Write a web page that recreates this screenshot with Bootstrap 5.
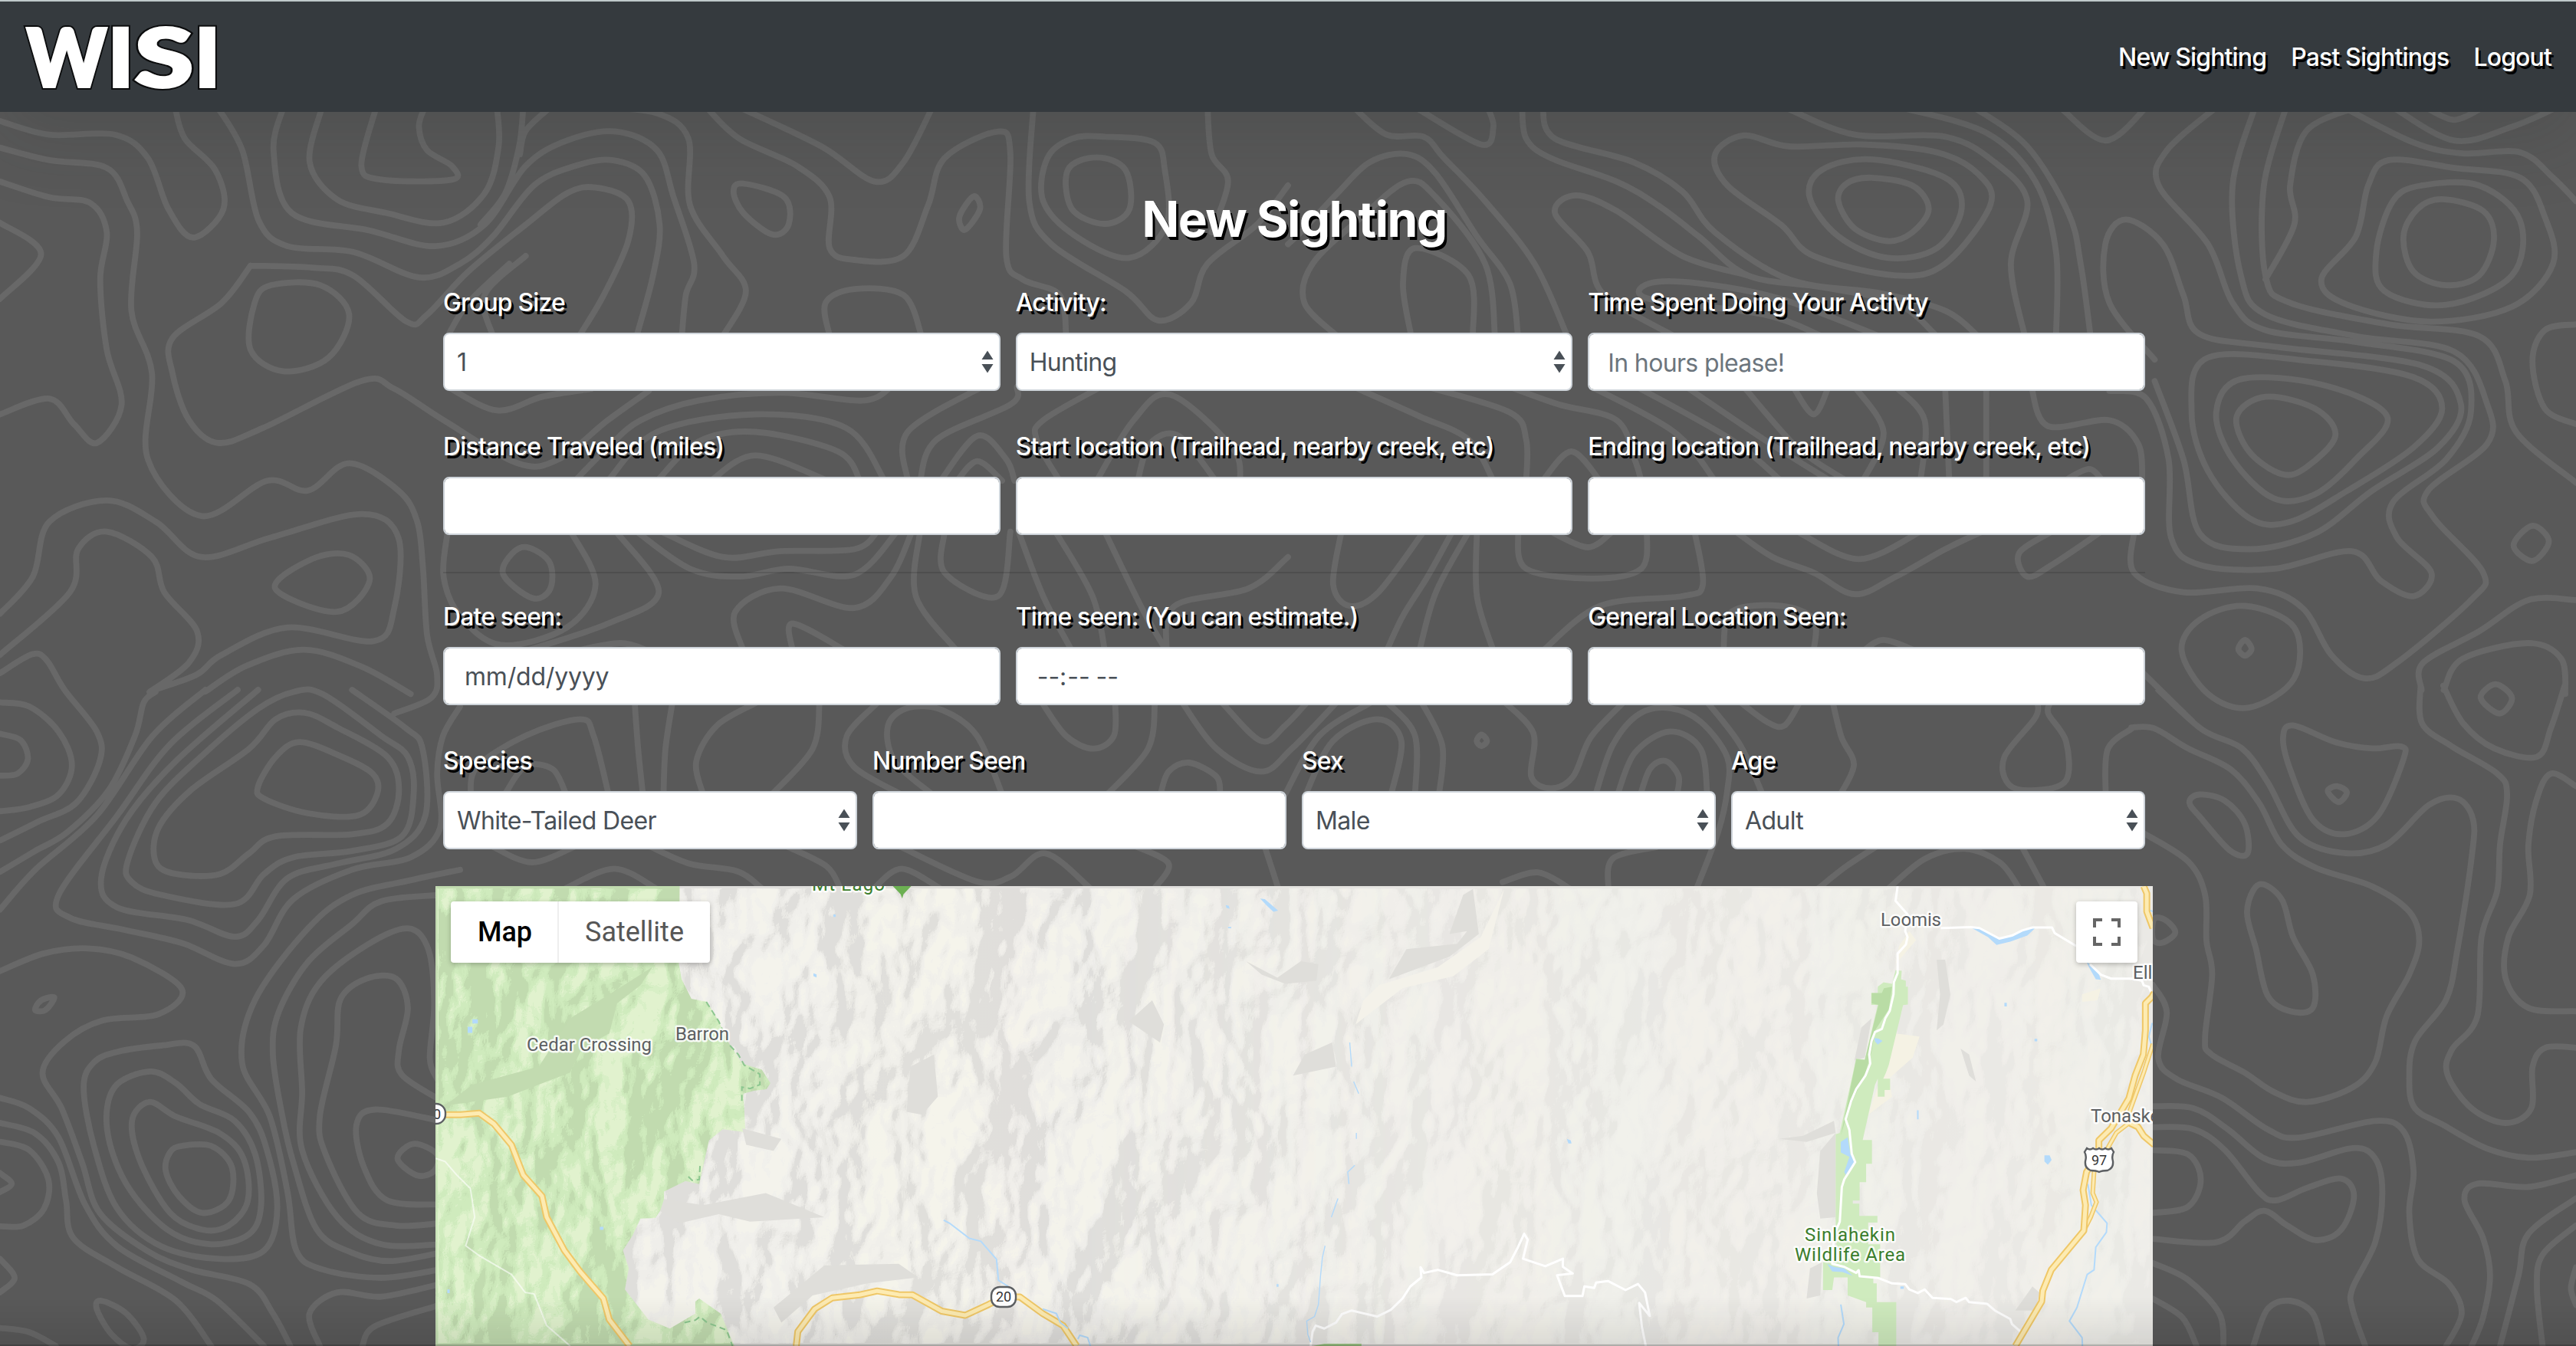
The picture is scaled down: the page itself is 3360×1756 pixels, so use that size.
<!DOCTYPE html>
<html lang="en">
<head>
<meta charset="utf-8">
<title>WISI - New Sighting</title>
<meta name="viewport" content="width=device-width, initial-scale=1">
<link href="https://cdn.jsdelivr.net/npm/bootstrap@5.3.0/dist/css/bootstrap.min.css" rel="stylesheet">
<style>
  html { font-size: 32px; height: 100%; overflow: hidden; }
  body {
    --bs-border-width: 2px;
    height: 100%; overflow: hidden; position: relative;
    background: #595959; color: #fff;
    font-family: Inter, "Liberation Sans", sans-serif; line-height: 1.5;
  }
  .topo { position: absolute; inset: 0; z-index: -1; }
  .topo path { fill: none; stroke: #686868; stroke-width: 7.8; stroke-linecap: round; stroke-linejoin: round; }
  .site-nav { height: 146px; background: #353a3e; border-top: 2px solid #bfc9ca; padding: 0 32px; --bs-navbar-nav-link-padding-x: 16px; }
  .site-nav .container-fluid { padding: 0; }
  .site-nav .navbar-nav .nav-link { padding: 2px 16px 0; line-height: 48px; }
  .site-nav .navbar-nav { margin-right: -16px; }
  .drop-ink { color: #fff !important; text-shadow: 3px 4px 0 #000; font-weight: 500; letter-spacing: -.86px; }
  .brand-mark { display: block; width: 256px; height: 104px; overflow: visible; }
  .brand-mark text { font-family: Lato, sans-serif; font-weight: 900; font-size: 104px; stroke-linejoin: miter; }
  .brand-mark .rim { fill: #0b0c0d; stroke: #0b0c0d; stroke-width: 8px; }
  .brand-mark .face { fill: #fff; stroke: #fff; stroke-width: 4px; }
  .sheet { width: 2240px; margin: 0 auto; padding-top: 101px; position: relative; left: 8px; }
  .sheet-title { font-size: 64px; font-weight: 700; line-height: 77px; margin: 0 0 46px; letter-spacing: -1.6px; text-shadow: 3px 4px 0 #000; }
  .sheet .row { --bs-gutter-x: 20px; margin: 0; }
  .field { margin-bottom: 48px; }
  .field .form-label { display: block; padding: 1px 0 0; margin-bottom: 15px; line-height: 48px; }
  .field .form-control, .field .form-select {
    height: 76px; border: 2px solid #ced4da; border-radius: 8px; background-color: #fff; color: #495057;
    font-size: 32px; padding: 13px 24px 11px; letter-spacing: -.65px; line-height: 48px;
  }
  .field input[type=date].form-control, .field input[type=time].form-control { padding-left: 26px; letter-spacing: -.2px; }
  .field input[type=time].form-control { letter-spacing: .4px; }
  .field .form-control::placeholder { color: #6c757d; opacity: 1; }
  .field .form-select {
    padding: 13px 56px 11px 16px;
    background-image: url("data:image/svg+xml,%3csvg xmlns='http://www.w3.org/2000/svg' viewBox='0 0 16 30'%3e%3cpath fill='%23495057' d='M8 .5L.5 12h15zM8 29.5L.5 18h15z'/%3e%3c/svg%3e");
    background-size: 16px 30px; background-position: right 7px center;
  }
  ::-webkit-calendar-picker-indicator { display: none !important; }
  .rule { height: 2px; margin: 0 10px 32px; background: rgba(0,0,0,.12); }
  .map-pane { height: 600px; overflow: hidden; background: #f0efea; }
  .map-pane > svg { display: block; }
  .map-pane .label { font: 400 24px Roboto, sans-serif; fill: #5c5f62; stroke: rgba(255,255,255,.85); stroke-width: 5px; paint-order: stroke; stroke-linejoin: round; }
  .map-pane .park { fill: #3a7d2c; }
  .map-pane g path { vector-effect: non-scaling-stroke; }
  .casing { fill: none; stroke: #efc767; stroke-width: 9; stroke-linejoin: round; }
  .hwy { fill: none; stroke: #fdebb2; stroke-width: 5; stroke-linejoin: round; }
  .casing2 { fill: none; stroke: #efc767; stroke-width: 6; }
  .hwy2 { fill: none; stroke: #fdebb2; stroke-width: 3; }
  .minor { fill: none; stroke: #fff; stroke-width: 3; stroke-linejoin: round; }
  .river { fill: none; stroke: #b3dafb; stroke-width: 2; }
  .lake { fill: #b3dafb; }
  .trail { fill: none; stroke: #8cc68f; stroke-width: 2; stroke-dasharray: 8 5; }
  .map-switch, .map-full { position: absolute; top: 20px; height: 80px; background: #fff; border-radius: 4px; box-shadow: 0 2px 6px rgba(0,0,0,.25); }
  .map-switch { left: 20px; width: 338px; font: 400 36px/80px Roboto, sans-serif; color: #565656; }
  .map-switch span:first-child { width: 141px; padding-left: 2px; color: #000; font-weight: 500; border-right: 2px solid #eee; }
  .map-full { right: 20px; width: 80px; }
  .edge { position: absolute; left: 0; right: 0; bottom: 0; height: 64px; pointer-events: none; background: linear-gradient(transparent, rgba(0,0,0,.09)); border-bottom: 2px solid rgba(0,0,0,.25); }
</style>
<script src="https://cdn.jsdelivr.net/npm/bootstrap@5.3.0/dist/js/bootstrap.bundle.min.js"></script>
</head>
<body>
<svg class="topo" id="topo" width="3360" height="1756" viewBox="0 0 3360 1756" aria-hidden="true"></svg>

<nav class="navbar navbar-expand site-nav shadow-lg">
  <div class="container-fluid">
    <a class="navbar-brand p-0 m-0" href="#" aria-label="WISI">
      <svg class="brand-mark" viewBox="32 20 256 104">
        <defs>
          <g id="wordmark">
            <text x="35" y="111" textLength="104" lengthAdjust="spacingAndGlyphs">W</text>
            <text x="141" y="111" textLength="33" lengthAdjust="spacingAndGlyphs">I</text>
            <text x="176" y="111" textLength="76" lengthAdjust="spacingAndGlyphs">S</text>
            <text x="254" y="111" textLength="33" lengthAdjust="spacingAndGlyphs">I</text>
          </g>
        </defs>
        <use href="#wordmark" class="rim"/>
        <use href="#wordmark" class="face"/>
      </svg>
    </a>
    <div class="navbar-nav">
      <a class="nav-link drop-ink" href="#">New Sighting</a>
      <a class="nav-link drop-ink" href="#">Past Sightings</a>
      <a class="nav-link drop-ink" href="#">Logout</a>
    </div>
  </div>
</nav>

<main class="sheet">
  <h1 class="sheet-title text-center">New Sighting</h1>
  <form>
    <div class="row">
      <div class="col-4 field"><label class="form-label drop-ink">Group Size</label><select class="form-select"><option>1</option></select></div>
      <div class="col-4 field"><label class="form-label drop-ink">Activity:</label><select class="form-select"><option>Hunting</option></select></div>
      <div class="col-4 field"><label class="form-label drop-ink">Time Spent Doing Your Activty</label><input class="form-control" type="text" placeholder="In hours please!"></div>
      <div class="col-4 field"><label class="form-label drop-ink">Distance Traveled (miles)</label><input class="form-control" type="text"></div>
      <div class="col-4 field"><label class="form-label drop-ink">Start location (Trailhead, nearby creek, etc)</label><input class="form-control" type="text"></div>
      <div class="col-4 field"><label class="form-label drop-ink">Ending location (Trailhead, nearby creek, etc)</label><input class="form-control" type="text"></div>
    </div>
    <div class="rule"></div>
    <div class="row">
      <div class="col-4 field"><label class="form-label drop-ink">Date seen:</label><input class="form-control" type="date"></div>
      <div class="col-4 field"><label class="form-label drop-ink">Time seen: (You can estimate.)</label><input class="form-control" type="time"></div>
      <div class="col-4 field"><label class="form-label drop-ink">General Location Seen:</label><input class="form-control" type="text"></div>
      <div class="col-3 field"><label class="form-label drop-ink">Species</label><select class="form-select"><option>White-Tailed Deer</option></select></div>
      <div class="col-3 field"><label class="form-label drop-ink">Number Seen</label><input class="form-control" type="text"></div>
      <div class="col-3 field"><label class="form-label drop-ink">Sex</label><select class="form-select"><option>Male</option></select></div>
      <div class="col-3 field"><label class="form-label drop-ink">Age</label><select class="form-select"><option>Adult</option></select></div>
    </div>
  </form>

  <div class="map-pane position-relative">
    <svg width="2240" height="600" viewBox="568 1156 2240 600">
      <defs>
        <filter id="relief" x="0" y="0" width="1" height="1" color-interpolation-filters="sRGB">
          <feTurbulence type="fractalNoise" baseFrequency="0.010 0.0065" numOctaves="4" seed="11"/>
          <feColorMatrix values="0 0 0 0 0  0 0 0 0 0  0 0 0 0 0  1 0 0 0 0"/>
          <feGaussianBlur stdDeviation="1.6"/>
          <feDiffuseLighting surfaceScale="34" lighting-color="#fff"><feDistantLight azimuth="200" elevation="58"/></feDiffuseLighting>
          <feComponentTransfer>
            <feFuncR type="discrete" tableValues=".871 .871 .871 .871 .871 .871 .871 .871 .871 .871 .871 .871 .871 .900 .915 .928 .941 .941 .949 .960"/>
            <feFuncG type="discrete" tableValues=".867 .867 .867 .867 .867 .867 .867 .867 .867 .867 .867 .867 .867 .896 .911 .924 .937 .937 .945 .953"/>
            <feFuncB type="discrete" tableValues=".855 .855 .855 .855 .855 .855 .855 .855 .855 .855 .855 .855 .855 .882 .896 .908 .918 .918 .925 .922"/>
          </feComponentTransfer>
        </filter>
        <filter id="reliefGreen" x="0" y="0" width="1" height="1" color-interpolation-filters="sRGB">
          <feTurbulence type="fractalNoise" baseFrequency="0.010 0.0065" numOctaves="4" seed="4"/>
          <feColorMatrix values="0 0 0 0 0  0 0 0 0 0  0 0 0 0 0  1 0 0 0 0"/>
          <feGaussianBlur stdDeviation="1.6"/>
          <feDiffuseLighting surfaceScale="34" lighting-color="#fff"><feDistantLight azimuth="200" elevation="58"/></feDiffuseLighting>
          <feComponentTransfer>
            <feFuncR type="discrete" tableValues=".76 .76 .76 .76 .76 .76 .76 .76 .76 .76 .76 .76 .76 .76 .785 .80 .815 .815 .85 .885"/>
            <feFuncG type="discrete" tableValues=".86 .86 .86 .86 .86 .86 .86 .86 .86 .86 .86 .86 .86 .86 .895 .91 .922 .922 .94 .95"/>
            <feFuncB type="discrete" tableValues=".69 .69 .69 .69 .69 .69 .69 .69 .69 .69 .69 .69 .69 .69 .715 .73 .745 .745 .78 .81"/>
          </feComponentTransfer>
        </filter>
        <linearGradient id="fadeEast" x1="0" x2="1"><stop offset="0" stop-color="#fff"/><stop offset=".38" stop-color="#eee"/><stop offset=".58" stop-color="#777"/><stop offset="1" stop-color="#4a4a4a"/></linearGradient>
        <mask id="eastMask"><rect x="568" y="1156" width="2240" height="600" fill="url(#fadeEast)"/></mask>
        <clipPath id="forest"><path transform="translate(560 1140) scale(.5102 .3929)" d="M16 41H640L638 300 645 350 670 415 710 425 740 490 765 560 800 630 850 650 872 695 862 715 830 720 803 730 808 858 750 848 715 885 695 1000 690 1030 655 1020 600 1055 600 1100 578 1143 540 1145 520 1200 495 1250 510 1310 500 1380 560 1480 615 1510 680 1460 680 1420 690 1410 745 1460 780 1568H16z"/></clipPath>
      </defs>
      <g mask="url(#eastMask)"><rect x="568" y="1156" width="2240" height="600" filter="url(#relief)"/></g>
      <g clip-path="url(#forest)"><rect x="568" y="1156" width="460" height="600" filter="url(#reliefGreen)"/></g>

      <g transform="translate(560 1140) scale(.5102 .3929)">
        <path fill="#c2dbb0" d="M360 480L460 400 570 310 540 370 480 430 460 530 390 580 360 660 200 740 40 770 110 700 280 640z"/>
        <path fill="#dfdeda" d="M600 1080L700 1100 860 1060 1010 1140 820 1155 740 1130 640 1160 590 1120zM1010 1300L1200 1295 1250 1340 1120 1360 980 1400 900 1490 880 1440zM1230 640L1290 600 1300 740 1260 800 1220 790zM800 845L900 880 880 920 810 900z"/>
        <path class="trail" d="M708 425L740 490 765 565 790 600 805 635 845 665 845 700 820 713 799 708 799 765M692 970L690 1015 672 1018 658 1000M652 1490L680 1482 692 1470 710 1490 760 1515 775 1568"/>
        <path class="minor" stroke-opacity=".6" style="stroke-width:2" d="M16 945L40 955 70 1000 105 1045 116 1140 93 1235 130 1270 210 1330 245 1390 268 1395 300 1500 360 1568"/>
        <path class="river" d="M1315 1150L1330 1160 1380 1210 1410 1220 1450 1280 1455 1350 1480 1370"/>
        <path class="casing" d="M16 800H80L128 795 165 830 210 900 240 1000 288 1070 300 1140 345 1250 385 1320 445 1410 460 1480 512 1568M938 1568L942 1520 985 1445 1030 1408 1100 1398 1145 1385 1200 1397 1235 1398 1310 1452 1370 1466 1430 1430 1468 1405 1510 1405 1568 1460 1620 1500 1655 1568"/>
        <path class="hwy" d="M16 800H80L128 795 165 830 210 900 240 1000 288 1070 300 1140 345 1250 385 1320 445 1410 460 1480 512 1568M938 1568L942 1520 985 1445 1030 1408 1100 1398 1145 1385 1200 1397 1235 1398 1310 1452 1370 1466 1430 1430 1468 1405 1510 1405 1568 1460 1620 1500 1655 1568"/>
        <path class="lake" d="M110 483h14v14h-14zM98 508h12v20h-12zM982 330l8 4 0 10-8-4zM436 1172h9v10h-9zM46 1380h6v12h-6zM1033 135h6v8h-6z"/>
        <path fill="#6cb052" d="M1185 41H1232L1212 68 1209 82 1205 68z"/>
      </g>
      <g transform="translate(1360 1140) scale(.5102 .3929)">
        <path fill="#dfdeda" d="M885 350L930 250 1060 232 1085 190 1040 200 1075 70 1100 50 1115 200 1040 275zM600 345L660 290 705 300 700 355 620 365 560 335 520 290zM640 670L670 600 740 560 750 640zM220 490L280 420 310 500 300 560z"/>
        <path fill="#f4f2ea" d="M860 370L1010 310 1120 210 1180 50 1140 250 1050 340 920 380 800 500 820 420z"/>
        <path class="minor" d="M685 1568L690 1520 698 1500 720 1510 750 1490 765 1462 790 1450 855 1470 890 1448 920 1410 940 1370 968 1340 966 1306 975 1325 1010 1315 1060 1333 1150 1330 1195 1290 1215 1240 1231 1195 1240 1215 1228 1278 1285 1303 1330 1278 1330 1305 1355 1327 1315 1333 1335 1402H1380L1385 1370 1410 1375 1415 1357 1445 1352 1490 1382 1522 1362 1540 1390 1552 1468 1525 1425 1532 1505 1542 1568"/>
        <path class="river" style="stroke-width:1.4" d="M785 560L790 640M795 690L808 730M802 860V880M798 968L780 990 783 1030M755 1078L738 1140M722 1235L715 1275 710 1340 705 1430 695 1470 675 1485 678 1530 685 1555"/>
        <path class="river" d="M0 1445L35 1460 45 1490 65 1510M90 1545L95 1532 115 1540 122 1568"/>
        <path class="lake" d="M556 82L568 84 602 122 590 126 575 108zM468 104l8 2 2 10-8-3zM474 176h8v5h-8zM1340 880l10 5 2 10-8 0zM598 1362h5v9h-5z"/>
        <path fill="#a5d08c" d="M690 1568L720 1560H815V1568z"/>
      </g>
      <g transform="translate(2160 1140) scale(.4464 .3929)">
        <path fill="#dfdeda" d="M820 285L845 285 860 400 840 500 820 520 830 400zM890 580L915 600 935 690 915 670zM480 920L525 860 525 1140 480 1145 470 1060zM600 510L630 480 610 610 580 620zM360 880L430 870 520 820 525 860 440 890zM450 1310L485 1290 480 1400 440 1410zM1100 1370L1120 1390 1110 1450 1050 1450z"/>
        <path fill="#f5f2e4" d="M740 190L760 220 700 300 710 240zM700 530L770 540 750 610 680 680 690 740 620 800 650 700zM1245 400L1300 380 1290 420 1245 425z"/>
        <path fill="#cfebbe" d="M700 320L718 322 716 350 730 355 730 375 736 375 736 434 722 436 680 635 672 660 664 680H684V718H668V740H648V680L640 700 604 884H631V963H614V1024H595V1085H575V1095H594V1136H647V1158H620V1230H655V1340H635V1360H645V1422H702V1568H650V1522H632V1440H614V1422L560 1400V1340H520L515 1382H488V1290L530 1270 525 1200V865L537 860 585 613 610 618 648 435H629V396H648V375L665 360 690 365z"/>
        <path fill="#b9dca5" d="M666 380L690 375 680 450 640 520 630 590 612 660 560 790 540 870 585 615 610 618 650 435 630 430V396H660z"/>
        <path class="lake" d="M920 178L950 183 1003 215 1040 205 1075 183 1108 180 1085 205 1035 225 995 236 970 210zM1258 292L1290 320 1300 352 1285 350 1265 310zM540 890L560 875 568 930 582 955 555 1000 550 990 565 940 540 925zM638 545l12 2 12 8-14 12-8-10zM1135 935L1150 935 1156 950 1145 966 1135 955zM500 1295L520 1305 550 1310 575 1335 545 1322 515 1320zM714 1370h10v8h-10zM1018 428h7v12h-7zM1106 548h8v8h-8z"/>
        <path class="river" d="M540 1430L549 1495 532 1540 533 1568M1262 1030L1272 1100 1318 1160 1316 1190 1285 1240 1280 1315 1260 1330 1230 1440 1208 1485 1245 1540 1246 1568M1450 495L1440 540 1448 570M1440 120L1452 125M1425 600L1400 700M765 785V815"/>
        <path class="minor" d="M706 41L700 90 735 135 728 190 735 210 730 235 706 265 706 330 695 360 694 400 683 455 670 480 660 515 640 525 630 555 623 600 626 630 612 670 585 715 570 755 554 815 565 850 572 930 582 957 550 1015 543 1040 537 1155 520 1200 515 1295 550 1305 585 1325 592 1316 595 1336 650 1342 690 1360 728 1362 740 1380 765 1392 785 1380 808 1408 862 1412 878 1422 905 1408 915 1422 968 1428 990 1450 1035 1478 1040 1495 1070 1525M832 180L920 177 945 180 1003 215 1040 205 1070 188 1100 178H1157L1165 197 1228 240M1268 300L1300 335 1330 348H1395L1420 355 1425 370 1440 375 1446 392"/>
        <path class="casing2" d="M1452 565L1425 660 1385 785 1385 825 1345 860 1310 930 1280 990 1276 1060 1287 1090 1270 1140 1250 1185"/>
        <path class="hwy2" d="M1452 565L1425 660 1385 785 1385 825 1345 860 1310 930 1280 990 1276 1060 1287 1090 1270 1140 1250 1185"/>
        <path class="casing" d="M1425 41L1434 65 1434 125 1452 180M1456 395L1448 410 1430 430 1430 520 1424 600 1400 670 1382 745 1330 845 1294 885V930L1258 990 1248 1050 1255 1100 1250 1185 1155 1315 1130 1385 1127 1420 1050 1568M1385 828L1408 840 1425 870 1456 900"/>
        <path class="hwy" d="M1425 41L1434 65 1434 125 1452 180M1456 395L1448 410 1430 430 1430 520 1424 600 1400 670 1382 745 1330 845 1294 885V930L1258 990 1248 1050 1255 1100 1250 1185 1155 1315 1130 1385 1127 1420 1050 1568M1385 828L1408 840 1425 870 1456 900"/>
      </g>

      <text class="label park" x="1059" y="1162" textLength="95">Mt Lago</text>
      <text class="label" x="687" y="1371" textLength="163">Cedar Crossing</text>
      <text class="label" x="881" y="1357" textLength="70">Barron</text>
      <text class="label" x="2453" y="1208" textLength="79">Loomis</text>
      <text class="label" x="2782" y="1277">Ell</text>
      <text class="label" x="2727" y="1464">Tonaske</text>
      <text class="label park" x="2354" y="1619" textLength="118">Sinlahekin</text>
      <text class="label park" x="2341" y="1645" textLength="144">Wildlife Area</text>

      <g fill="#fff" stroke="#5c5f62" stroke-width="2.4">
        <rect x="550" y="1440" width="31" height="26" rx="12"/>
        <rect x="1293" y="1679" width="32" height="26" rx="11"/>
        <path d="M2722 1498q4 3 8 0q4 3 8 0q4 3 8 0q4 3 8 0l3 5q-3 5-1 12q1 9-7 12q-7 0-11 2q-4-2-11-2q-8-3-7-12q2-7-1-12z"/>
      </g>
      <g font-family="Roboto, sans-serif" font-size="18" fill="#333" text-anchor="middle">
        <text x="570" y="1460">0</text><text x="1309" y="1698">20</text><text x="2738" y="1520">97</text>
      </g>
    </svg>
    <div class="map-switch d-flex text-center"><span>Map</span><span class="flex-fill">Satellite</span></div>
    <div class="map-full d-flex align-items-center justify-content-center">
      <svg width="36" height="36" viewBox="0 0 36 36" fill="none" stroke="#666" stroke-width="4"><path d="M2 12V2H12M24 2H34V12M34 24V34H24M12 34H2V24"/></svg>
    </div>
  </div>
</main>
<div class="edge"></div>

<script>
// Contour lines, grouped by tile: origin, scale, then "x,y x,y ..." lists; a leading "o" closes the ring.
const tiles = [
 {x:0,y:140,sx:.93333,sy:1.96,lines:`
0,35 60,70 140,70 180,130 205,260 235,333 272,260 262,160 225,80 213,0
0,103 60,135 130,155 155,240 167,320 160,520 185,680 180,900 245,1045 325,955 375,980 425,910 485,980 508,1060 515,1180 520,1350 532,1450 525,1510 480,1550
0,190 60,230 110,245 130,320 122,440 130,620 148,760 118,858 90,810 60,745 0,785
0,295 50,375 0,490
265,0 295,110 315,290 350,355 430,370 510,435 560,400 600,330 650,200 700,150 745,135 785,175 803,300 795,430 775,585
345,0 333,110 355,270 450,315 530,355 590,300 640,150 690,85 750,62 800,110 820,230 845,400 835,480 830,585
392,0 377,140 410,235 470,270 540,295 590,220 607,100 605,0
458,0 440,150 465,185 550,185 550,150 520,110 510,50 517,0
637,0 632,100 615,220 585,300
670,0 640,60 633,120
305,405 380,410 430,430 495,548 520,530 570,420 640,300 690,220 725,205 765,240 765,340 735,480 705,585
305,405 270,500 210,590 210,680 230,800 265,858 320,820 440,700 480,720 540,800 630,910 680,900 740,800 790,725
o330,455 390,455 425,530 400,640 345,675 305,620 310,500
730,0 800,15 838,80 840,250 880,380 908,470 880,585
860,0 900,80 970,150 1010,230 1010,360 1040,390 1100,380 1130,250 1150,130 1215,62 1230,120 1225,380 1245,440 1290,480 1298,585
900,0 1000,100 1065,190 1100,140 1135,0
o905,195 955,230 960,300 940,325 905,270 893,215
o1185,228 1193,260 1175,313 1168,280
o1335,128 1370,160 1375,260 1345,298 1305,260 1300,160
o1345,75 1405,90 1418,160 1420,300 1375,385 1310,330 1270,240 1275,130 1305,80
1258,0 1253,240 1280,350 1370,470 1410,545 1450,500 1470,400 1530,300 1568,200
1470,0 1475,120 1495,190 1475,320
600,585 590,480 640,380
545,585 570,500 620,400
1010,585 1005,500 1040,465 1100,480 1122,585
545,715 605,775 660,740 720,720
700,955 740,870 780,800 850,750 950,730 1050,750 1085,715
740,955 800,830 920,785 1030,820 1077,955
800,955 850,855 920,830 1020,880 1047,955
865,955 920,890 1008,955
1105,955 1105,830 1195,715
1120,955 1140,850 1230,760 1238,715
1145,955 1190,840 1225,900 1235,955
1165,955 1190,905 1220,955
1290,955 1262,850 1270,800 1340,715
1335,955 1380,800 1425,735 1500,870 1510,955
1385,955 1400,860 1435,840 1480,955
0,1295 40,1200 60,1060 130,1005 190,1060 245,1150 330,1100 440,1040 485,1100 480,1280 455,1365 350,1330 270,1400 240,1450 190,1488
0,1400 85,1240 95,1130 130,1085 185,1150 200,1240 240,1340 230,1420 182,1495
o335,1230 380,1155 425,1145 450,1210 410,1290
o635,1125 668,1160 670,1230 648,1255 612,1190
545,1085 540,1200 560,1300 610,1375 690,1330 725,1220 695,1085
750,1085 802,1240 740,1320 640,1390
805,1085 880,1150 950,1135 1040,1130 1068,1085
775,1085 840,1180 900,1200 960,1180 1040,1195 1092,1085
905,1390 895,1290 950,1230 1040,1280 1085,1200 1110,1085
965,1390 965,1320 1030,1390
1120,1085 1115,1250 1165,1390
1150,1085 1150,1190 1215,1250 1230,1085
1420,1390 1430,1275 1520,1230 1568,1150
1240,1085 1270,1250 1305,1390
1285,1085 1330,1250 1345,1390
1345,1085 1390,1280 1420,1390
700,1390 755,1370 790,1390
250,1494 300,1428 370,1387 440,1430 500,1500`},
 {x:1680,y:140,sx:.93333,sy:1.96,lines:`
80,0 120,70 165,75 190,130 240,240 300,400 340,585
155,0 235,95 250,50 243,0
285,0 290,80 320,130 400,190 450,250 500,330 560,430 650,460 740,500 790,585
310,0 325,80 420,140 480,215 520,320 610,440 720,475 800,520 840,585
o555,72 610,100 700,95 790,115 840,170 855,250 800,400 740,430 640,380 600,300 535,200 520,120
o710,133 800,180 820,260 790,360 730,385 670,330 635,230 650,160
o710,180 760,200 780,260 760,320 730,342 690,310 670,240 680,195
605,0 690,70 800,75 860,140 900,240 880,400 897,585
745,0 850,65 910,190 935,370 935,585
835,0 900,100 950,270 965,400 977,585
940,0 995,85 1045,0
1130,0 1070,110 1060,200 1120,350 1150,500 1190,570 1300,600 1420,650 1440,780 1410,900 1345,1010 1350,1100 1392,1190 1370,1250 1330,1210 1295,1135 1200,1180 1110,1170 1075,1100 1072,900 1045,745 1000,725
1177,0 1150,200 1160,430 1190,530 1300,585 1420,625 1460,760 1460,860 1388,980 1395,1050 1455,1190 1440,1260 1350,1420 1310,1460 1270,1400 1235,1280 1180,1230 1090,1240 1030,1190 1030,1085
1215,0 1188,200 1190,430 1220,500 1340,555 1450,585 1482,700 1495,830 1568,960
1300,0 1240,60 1220,200 1225,300 1190,440
o1340,135 1420,155 1500,180 1530,280 1540,400 1490,510 1390,548 1290,505 1258,440 1300,330 1315,200
o1380,200 1450,200 1500,290 1490,430 1410,505 1335,470 1325,370 1345,240
o1405,235 1455,265 1468,340 1450,430 1410,455 1370,420 1358,330 1375,260
1285,0 1370,90 1430,118 1500,115 1540,180 1568,240
1345,0 1420,85 1490,50 1545,0
1385,0 1420,32 1455,0
1568,555 1530,570 1515,650 1530,770 1568,810
o1160,695 1260,710 1338,790 1300,900 1250,990 1200,1000 1150,900 1130,780
o1190,740 1250,770 1275,840 1240,920 1210,938 1170,880 1155,790
o1120,640 1250,650 1370,690 1405,770 1370,870 1290,980 1220,1060 1170,1050 1120,930 1100,780
1055,645 1000,500 995,350 1020,287 1065,350 1090,480 1110,580 1200,612 1380,660 1428,760 1400,870 1320,980 1250,1090 1170,1130 1110,1090 1090,900 1055,700
o1515,1070 1535,1110 1515,1160 1492,1120
o1165,1275 1225,1330 1225,1460 1170,1535 1120,1500 1088,1390 1110,1310
o1165,1362 1173,1385 1165,1402 1157,1385
1568,1260 1510,1260 1450,1340 1382,1420 1380,1490
1555,1500 1550,1410 1510,1370 1430,1410 1407,1490
o1470,1475 1490,1510 1475,1550 1452,1510
470,585 385,480 365,370 325,270 350,225 400,265 480,380 560,430
650,585 580,530 440,490 440,450 500,450 600,490 720,585
0,350 20,310 60,220 100,140 145,120 180,170 230,330 270,450 280,585
60,585 20,500 30,400 90,280 145,190 180,230 240,400 252,585
150,585 140,450 155,360 220,430 225,585
80,715 160,790 220,850 250,955
170,715 270,780 290,850 290,955
270,715 330,760 400,800 422,900 430,955
370,715 470,830 520,955
425,715 540,850 600,955
485,715 580,850 660,955
555,715 620,870 680,955
690,715 725,830 700,955
740,715 775,800 770,955
800,715 805,955
850,715 850,955
615,715 640,785 658,715
905,715 925,815 1000,800 1035,860 1040,955
945,955 975,925 992,955
310,955 345,880 380,955
65,1085 55,1220 75,1275 110,1240 165,1085
120,1390 140,1300 170,1200 200,1085
160,1390 180,1240 220,1085
230,1085 230,1250 250,1390
280,1085 290,1180 370,1205 430,1180 437,1085
320,1085 365,1125 395,1085
495,1085 505,1220 480,1250 380,1275 310,1390
545,1085 590,1150 640,1190 690,1245 740,1200 800,1130 845,1085
620,1085 695,1155 770,1085
930,1085 890,1140 900,1200 930,1170 990,1085
530,1390 540,1290 600,1275 640,1310 640,1390
700,1390 725,1362 765,1390`},
 {x:0,y:900,sx:2.6133,sy:1.8318,lines:`
0,30 100,40 200,100 245,180 200,250 100,280 0,290
0,105 70,120 95,165 60,200 0,205
0,-40 110,-85 160,-70 220,0 330,100 340,170 260,270 130,315 0,360
530,5 490,30 460,110 370,240 230,340 120,385 0,435
700,0 520,110 330,300 120,430 0,525
810,0 580,130 400,300 200,490 240,545 420,573 620,605 800,655 900,610 1000,500 1200,430 1400,400 1500,330 1490,200 1510,110 1568,40
880,0 600,170 430,310 345,450 400,520 640,550 800,590 880,550 980,450 1150,415 1350,380 1450,300 1440,140 1380,90 1200,0
o1000,5 1100,10 1300,110 1390,160 1410,250 1370,350 1200,385 1000,400 900,440 800,512 550,490 450,460 435,410 530,270 700,150 880,45
o1040,55 1150,90 1320,160 1360,240 1320,320 1200,345 940,350 850,390 750,440 600,440 530,410 540,330 650,240 850,140 940,70
o1020,125 1150,155 1270,200 1285,250 1220,300 1050,295 900,260 880,230 940,160
0,672 150,630 300,618 450,640 620,715 540,775 350,790 220,840 145,915 210,1000 280,1130 340,1250 500,1340 650,1385 850,1420 930,1490 990,1568
o120,765 140,742 185,735 155,765
o400,865 550,850 660,850 720,930 850,1010 910,1100 945,1240 900,1340 750,1360 550,1330 400,1240 320,1090 285,950 320,890
o510,912 600,940 680,990 800,1030 870,1110 890,1230 850,1300 720,1325 570,1290 430,1180 365,1050 390,950
o510,985 600,1020 750,1060 830,1120 845,1220 780,1280 690,1290 580,1250 480,1130 450,1030
o620,1090 720,1090 790,1140 780,1220 690,1250 610,1210 565,1150 580,1105
0,975 100,1000 200,1070 290,1230 400,1330 620,1415 740,1460 900,1568
0,1035 120,1060 200,1130 225,1220 250,1310 400,1380 600,1460 720,1568
0,1080 100,1100 165,1170 150,1240 80,1280 0,1282
0,1155 40,1180 0,1200
0,1360 50,1405 0,1440
0,1525 100,1535 190,1568
o345,1460 430,1490 490,1550 450,1575 380,1540 330,1480
1500,490 1300,505 1200,560 1050,650 950,770 930,870 960,1010 1000,1130 1080,1290 1200,1345 1330,1365 1500,1345
1568,430 1400,455 1200,490 1050,570 870,740 825,890 920,1020 980,1200 1010,1340 1100,1385 1300,1405 1500,1385
1500,1325 1300,1325 1150,1260 1030,1100 1030,960 1025,810 1090,700 1250,610 1390,570 1460,620 1480,750 1465,880 1490,930
1500,980 1370,920 1360,860 1390,760 1350,690 1250,690 1160,740 1145,850 1090,1020 1110,1110 1220,1250 1350,1280 1500,1275
1500,1030 1280,1003 1215,1040 1240,1140 1320,1220 1500,1230
o1410,1085 1490,1110 1480,1150 1420,1160 1355,1120
1090,1568 1055,1490 1150,1440 1300,1450 1500,1420
1235,1568 1280,1520 1500,1470`},
 {x:560,y:760,sx:1.12,sy:3,lines:`
60,830 70,720 140,600 220,535 240,600 262,830
110,830 140,720 180,730 200,830
300,470 305,650 312,830
355,470 345,650 342,830
400,830 390,700 420,560 478,470
570,470 560,650 500,830
690,830 620,720 610,600 655,470
735,830 680,700 670,560 700,490 750,500 800,600 837,830
895,470 930,600 970,650 1000,600 1002,470
990,830 1050,650 1060,470
1068,830 1080,740 1110,705 1150,760 1155,830
1100,470 1150,650 1215,740 1260,650 1325,470
1158,470 1215,620 1250,560 1282,470
1280,830 1320,620 1385,535 1420,620 1405,830
1250,830 1300,600 1375,470
1440,830 1440,600 1400,470
1475,830 1480,640 1450,470
o1537,595 1545,620 1537,640 1530,620
90,1030 150,1095 215,1030
200,1195 270,1120 330,1195
320,1030 380,1100 450,1130 485,1195
520,1030 580,1110 600,1195
650,1195 690,1120 745,1195
685,1030 800,1170 850,1150 900,1060 965,1195
1030,1030 1080,1100 1060,1195
1220,1030 1240,1195`},
 {x:1960,y:360,sx:1.742,sy:1.96,lines:`
5,1090 70,1170 65,1280 110,1310 160,1280 200,1180 275,1090
210,1330 250,1200 310,1120 380,1105 450,1140 510,1230 510,1318 490,1420 440,1568
260,1330 300,1220 380,1165 450,1210 465,1330
312,1330 335,1260 370,1240 400,1280 395,1330
465,1090 540,1200 592,1330
540,1090 600,1140 640,1150 675,1090
750,1090 770,1180 798,1250 765,1330
1215,1090 1210,1130 1140,1230 1150,1300 1210,1315 1280,1290 1280,1190 1240,1120 1245,1090
240,1568 250,1490 350,1460
0,1550 80,1525 155,1568
715,1568 780,1510 855,1455
875,1568 960,1490 1050,1465 1130,1500 1175,1568
1180,1460 1232,1568
1370,1325 1375,1210 1430,1157
1455,1015 1568,1140`},
 {x:2780,y:900,sx:2.7034,sy:1.8318,lines:`
95,0 250,95 390,140 480,220 590,350 750,390 900,370 1050,275 1150,260 1205,310 1200,400 1150,620 1110,740 1000,840 980,930 1000,1000 1100,1040 1250,1095 1400,1118 1568,1105
0,90 80,92 200,140 350,190 450,270 530,370 650,425 850,470 980,530 1015,600 980,680 900,780 860,890 780,950 620,985 500,960 400,915 280,870 260,830 285,680 265,600 260,490 200,410 45,343
o570,85 720,125 850,140 950,135 960,165 870,300 750,345 640,310 560,190 535,115
o725,230 760,245 730,268 693,242
o240,250 330,265 400,320 410,390 350,385 250,310 205,270
o450,465 530,500 570,590 640,680 640,760 560,768 480,730 440,620 408,530
1020,-10 1025,80 1130,135 1290,200 1325,250 1300,370 1290,480 1235,590 1220,780 1130,860 1115,920 1200,1000 1320,1035 1410,1000 1415,900 1460,855 1568,855
1100,-10 1170,80 1280,140 1430,160 1480,90 1528,-10
1568,230 1480,200 1430,260 1400,370 1405,490 1330,590 1320,690 1400,760 1568,768
o80,548 120,550 155,580 110,604 76,595
76,705 125,770 95,880 160,930 320,975 480,1050 590,1070 860,1030 960,1055 995,1150 980,1250 1010,1360 1120,1420 1165,1490 1110,1568
76,995 220,1000 340,1050 470,1120 590,1130 780,1095 860,1120 885,1200 860,1320 780,1430 780,1480 825,1568
76,1045 220,1050 330,1100 450,1200 510,1220 620,1190 740,1168 785,1210 740,1290 650,1315 550,1280 470,1245 400,1270 300,1320 76,1312
76,1100 200,1110 245,1170 200,1235 76,1250
76,1370 200,1410 310,1490 325,1568
76,1455 180,1500 230,1568
430,1568 480,1480 560,1460 640,1490 675,1568
1568,1160 1400,1188 1220,1180 1175,1220 1240,1310 1265,1400 1240,1500 1200,1568
1568,1215 1400,1300 1365,1400 1300,1568
1568,1280 1450,1350 1430,1430 1450,1568
1568,1380 1550,1430 1568,1470`}
];
let d = "";
for (const t of tiles) for (let line of t.lines.trim().split("\n")) {
  const ring = line[0] === "o";
  const p = line.replace("o", "").trim().split(" ").map(s => { const [a, b] = s.split(",").map(Number); return [t.x + a / t.sx, t.y + b / t.sy]; });
  const n = p.length, at = i => ring ? p[(i + n) % n] : p[Math.max(0, Math.min(n - 1, i))];
  d += "M" + p[0].map(v => v.toFixed(1));
  for (let i = 0; i < (ring ? n : n - 1); i++) {
    const a = at(i - 1), b = at(i), c = at(i + 1), e = at(i + 2);
    d += "C" + [b[0] + (c[0] - a[0]) / 6, b[1] + (c[1] - a[1]) / 6, c[0] - (e[0] - b[0]) / 6, c[1] - (e[1] - b[1]) / 6, c[0], c[1]].map(v => v.toFixed(1));
  }
}
document.getElementById("topo").innerHTML = '<path d="' + d + '"/>';
</script>
</body>
</html>
